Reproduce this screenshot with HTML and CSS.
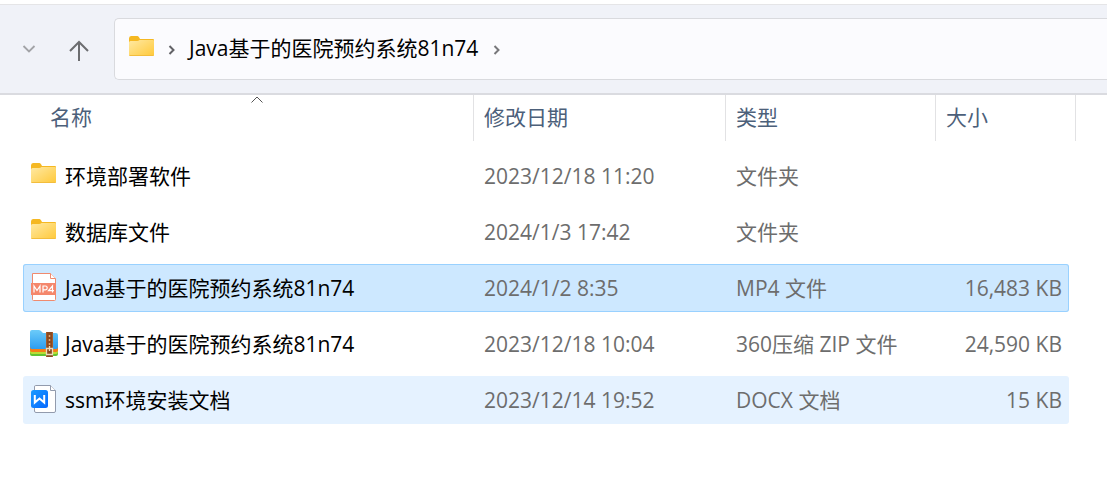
FILE: index.html
```html
<!DOCTYPE html>
<html lang="zh-CN">
<head>
<meta charset="utf-8">
<title>Java基于的医院预约系统81n74</title>
<link rel="stylesheet" href="styles.css">
</head>
<body>
<svg class="defs" aria-hidden="true">
  <defs>
    <linearGradient id="folderFill" x1="0" y1="0" x2="1" y2="1">
      <stop offset="0" stop-color="#ffe9a3"/><stop offset="1" stop-color="#ffc93a"/>
    </linearGradient>
    <linearGradient id="zipFill" x1="0" y1="0" x2="0" y2="1">
      <stop offset="0" stop-color="#6ccbf9"/><stop offset="1" stop-color="#2c9df0"/>
    </linearGradient>
    <linearGradient id="docFill" x1="0" y1="0" x2="1" y2="1">
      <stop offset="0" stop-color="#1a9bff"/><stop offset="1" stop-color="#0668ff"/>
    </linearGradient>
    <symbol id="folder" viewBox="0 0 28 28">
      <path d="M1 4.500Q1 2 3 2H9.500Q10.500 2 11.200 3.500L12 5H25Q26 5 26 6V12H1Z" fill="#f5b822"/>
      <path d="M1 8.500Q1 7 2.500 7H9Q10.500 7 11.500 6H25Q26 6 26 7V21Q26 22 25 22H2Q1 22 1 21Z" fill="url(#folderFill)"/>
      <path d="M1.500 21.500H25.500" stroke="#f3bd3c"/>
    </symbol>
  </defs>
</svg>

<header class="toolbar">
  <button class="nav-button recent" type="button" aria-label="最近的位置">
    <svg width="14" height="10" viewBox="0 0 14 10"><path d="M1.500 2L7 7.500L12.500 2" fill="none" stroke="#a2a3a7" stroke-width="1.800"/></svg>
  </button>
  <button class="nav-button up" type="button" aria-label="向上">
    <svg width="20" height="22" viewBox="0 0 20 22"><path d="M10 21V2M1 11L10 2L19 11" fill="none" stroke="#6c6d70" stroke-width="2"/></svg>
  </button>
  <nav class="address" aria-label="地址">
    <svg class="icon" aria-hidden="true"><use href="#folder"/></svg>
    <svg class="crumb-arrow" viewBox="0 0 8 10"><path d="M1.500 1L5.500 5L1.500 9" fill="none" stroke="#626266" stroke-width="2"/></svg>
    <a class="crumb" href="#">Java基于的医院预约系统81n74</a>
    <svg class="crumb-arrow" viewBox="0 0 8 10"><path d="M1.500 1L5.500 5L1.500 9" fill="none" stroke="#77777b" stroke-width="2"/></svg>
  </nav>
</header>

<main class="files">
  <table class="list">
    <thead>
      <tr class="head">
        <th scope="col" aria-sort="ascending">名称
          <svg class="sort" width="12" height="7" viewBox="0 0 12 7"><path d="M0.500 6.500L6 1L11.500 6.500" fill="none" stroke="#555"/></svg>
        </th>
        <th scope="col">修改日期</th>
        <th scope="col">类型</th>
        <th scope="col">大小</th>
      </tr>
    </thead>
    <tbody>
      <tr class="row">
        <td class="name"><svg class="icon" aria-hidden="true"><use href="#folder"/></svg>环境部署软件</td>
        <td>2023/12/18 11:20</td><td>文件夹</td><td class="size"></td>
      </tr>
      <tr class="row">
        <td class="name"><svg class="icon" aria-hidden="true"><use href="#folder"/></svg>数据库文件</td>
        <td>2024/1/3 17:42</td><td>文件夹</td><td class="size"></td>
      </tr>
      <tr class="row selected" aria-selected="true">
        <td class="name">
          <svg class="icon" viewBox="0 0 28 28" aria-hidden="true">
            <path d="M2.500 .5H20.500L25.500 5.500V26.500Q25.500 27.500 24.500 27.500H3.500Q2.500 27.500 2.500 26.500Z" fill="#fff" stroke="#f08a6e"/>
            <path d="M20.500 .5V5.500H25.500" fill="#fff" stroke="#f08a6e"/>
            <path d="M1 10H26V22H1Z" fill="#f4876c"/>
            <path d="M4 19.500V13L7 17.500L10 13V19.500M13 19.500V13H15.500Q17.200 13 17.200 15Q17.200 16.800 15.500 16.800H13M22.500 19.500V13L18.500 17.700H24" fill="none" stroke="#fff" stroke-width="1.200"/>
          </svg>Java基于的医院预约系统81n74</td>
        <td>2024/1/2 8:35</td><td>MP4 文件</td><td class="size">16,483 KB</td>
      </tr>
      <tr class="row">
        <td class="name">
          <svg class="icon" viewBox="0 0 28 28" aria-hidden="true">
            <path d="M0 20H28V25Q28 27 26 27H2Q0 27 0 25Z" fill="#62c332"/>
            <path d="M0 20H28V23Q28 25 26 25H2Q0 25 0 23Z" fill="#b9dc35"/>
            <path d="M0 18H28V21Q28 23 26 23H2Q0 23 0 21Z" fill="#f57e16"/>
            <path d="M0 3Q0 1 2 1H9Q10.500 1 11.500 2.500L13 4H26Q28 4 28 6V18Q28 20 26 20H2Q0 20 0 18Z" fill="url(#zipFill)"/>
            <path d="M16 3H23V28H16Z" fill="#8b4a20"/>
            <path d="M16.500 3V28M22.500 3V28" stroke="#a65c2b"/>
            <path d="M19.500 6V8M19.500 10V12M19.500 14V16" stroke="#e0a876" stroke-width="1.500"/>
            <path d="M16.500 19.500H22.500V25.500H16.500ZM19.500 17V22" fill="none" stroke="#ecdcbc" stroke-width="1.300"/>
          </svg>Java基于的医院预约系统81n74</td>
        <td>2023/12/18 10:04</td><td>360压缩 ZIP 文件</td><td class="size">24,590 KB</td>
      </tr>
      <tr class="row hover">
        <td class="name">
          <svg class="icon" viewBox="0 0 28 28" aria-hidden="true">
            <path d="M5.500 .5H20.500L25.500 5.500V26Q25.500 27.500 24 27.500H6Q4.500 27.500 4.500 26V2Q4.500 .5 5.500 .5Z" fill="#fff" stroke="#929bad"/>
            <path d="M20.500 .5V5.500H25.500" fill="#fff" stroke="#929bad"/>
            <rect x="1" y="5" width="17" height="18" rx="2.500" fill="url(#docFill)"/>
            <path d="M4.800 10V17.500L9.500 13.500L14.200 17.500V10" fill="none" stroke="#fff" stroke-width="2"/>
          </svg>ssm环境安装文档</td>
        <td>2023/12/14 19:52</td><td>DOCX 文档</td><td class="size">15 KB</td>
      </tr>
    </tbody>
  </table>
</main>
</body>
</html>
```

FILE: styles.css
```css
* {
  box-sizing: border-box;
}

body {
  margin: 0;
  background: #fff;
  color: #000;
  font: 21px/28px "Open Sans", "Noto Sans CJK SC", sans-serif;
}

.defs {
  position: absolute;
  width: 0;
  height: 0;
}

.toolbar {
  display: flex;
  align-items: center;
  margin-top: 4px;
  padding: 13px 0 13px 16px;
  background: #f0f2f8;
  border-top: 1px solid #e5e5e7;
  border-bottom: 2px solid #dadbe0;
}

.nav-button {
  display: flex;
  align-items: center;
  justify-content: center;
  height: 32px;
  padding: 0;
  border: 0;
  background: none;
}

.recent {
  width: 25px;
}

.up {
  width: 36px;
  margin: 4px 17px 0 20px;
}

.address {
  display: flex;
  flex: 1;
  align-items: center;
  height: 62px;
  padding: 0 0 2px 13px;
  background: #fbfbfe;
  border: 1px solid #d9dade;
  border-right: 0;
  border-radius: 5px 0 0 5px;
}

.icon {
  flex: none;
  width: 28px;
  height: 28px;
}

.crumb-arrow {
  width: 8px;
  height: 10px;
  margin: 4px 13px 0 12px;
}

.crumb {
  margin-right: 3px;
  color: inherit;
  text-decoration: none;
  white-space: nowrap;
}

.files {
  padding: 0 31px 24px 23px;
}

.list,
.list thead,
.list tbody {
  display: block;
}

.head,
.row {
  display: grid;
  grid-template-columns: minmax(0, 1fr) 252px 210px 140px;
  align-items: center;
}

.head {
  margin-left: 17px;
}

.head th {
  position: relative;
  height: 46px;
  padding: 8px 10px 10px;
  border-right: 1px solid #e2e2e4;
  color: #4c607a;
  font-weight: 400;
  text-align: left;
}

.sort {
  position: absolute;
  top: 1px;
  left: calc(50% - 6px);
}

.list tbody {
  padding-top: 11px;
}

.row {
  grid-template-columns: minmax(0, 1fr) 252px 210px 133px;
  height: 48px;
  margin: 0 7px 8px 0;
  border-radius: 3px;
  color: #6d6d6d;
  white-space: nowrap;
}

.row td {
  padding: 0 0 0 10px;
}

.row .name {
  display: flex;
  align-items: center;
  gap: 7px;
  padding-left: 7px;
  color: #000;
}

.row .icon {
  margin-bottom: 2px;
}

.row .size {
  padding: 0 7px 0 0;
  text-align: right;
}

.selected {
  background: #cde8ff;
  box-shadow: inset 0 0 0 1px #99d1ff;
}

.hover {
  background: #e5f2ff;
}
```
